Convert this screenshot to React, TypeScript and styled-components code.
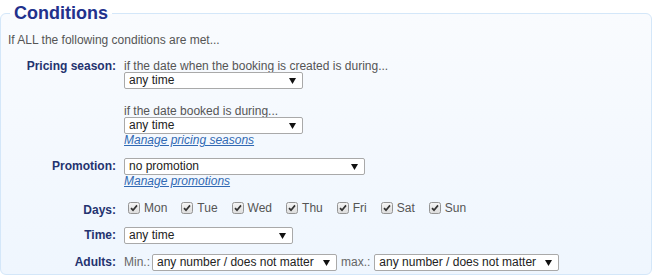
import React from "react";
import { styled, createGlobalStyle } from "styled-components";

const GlobalStyle = createGlobalStyle`
  body {
    margin: 0;
    background: #ffffff;
    font-family: "Liberation Sans", Arial, sans-serif;
    font-size: 12px;
    color: #555555;
  }
`;

const Fieldset = styled.fieldset`
  margin: 2px 0 0;
  padding: 0 7px 0 7px;
  height: 273px;
  box-sizing: border-box;
  border: 1px solid #d4e7f9;
  border-radius: 6px;
  background: linear-gradient(#f9fbfe, #eff6fe);
  min-width: 0;
`;

const Legend = styled.legend`
  margin-left: 2px;
  padding: 0 4px;
  font-size: 18px;
  font-weight: 700;
  line-height: 22px;
  color: #22318c;
`;

const Intro = styled.p`
  margin: 9px 0 0;
  line-height: 14px;
  color: #555555;
`;

const Row = styled.div<{ $top: number }>`
  display: flex;
  align-items: baseline;
  margin-top: ${(p) => p.$top}px;
`;

const Label = styled.div`
  flex: 0 0 108px;
  margin-right: 8px;
  text-align: right;
  font-weight: 700;
  line-height: 14px;
  color: #24336f;
`;

const Cell = styled.div`
  display: flex;
  flex-direction: column;
  align-items: flex-start;
`;

const Hint = styled.span<{ $gap?: number }>`
  line-height: 12px;
  margin-top: ${(p) => p.$gap ?? 0}px;
  color: #555555;
`;

const SelectBox = styled.div<{ $w: number }>`
  display: inline-flex;
  align-items: center;
  justify-content: space-between;
  box-sizing: border-box;
  width: ${(p) => p.$w}px;
  height: 17px;
  padding: 0 6px 0 4px;
  border: 1px solid #a9a9a9;
  border-radius: 2px;
  background: #ffffff;
  color: #222222;
  line-height: 15px;
  white-space: nowrap;
`;

const ManageLink = styled.a`
  line-height: 13px;
  font-style: italic;
  color: #3169b3;
  text-decoration: underline;
  cursor: pointer;
`;

const Days = styled.div`
  display: flex;
  align-items: center;
  gap: 14px;
  margin-left: 4px;
  height: 20px;
`;

const Day = styled.label`
  display: inline-flex;
  align-items: center;
  gap: 4px;
  line-height: 14px;
  color: #555555;
`;

const Inline = styled.div`
  display: flex;
  align-items: baseline;
`;

const Small = styled.span<{ $mr: number; $ml?: number }>`
  margin-right: ${(p) => p.$mr}px;
  margin-left: ${(p) => p.$ml ?? 0}px;
  color: #666666;
`;

const Arrow = () => (
  <svg width="7" height="6" viewBox="0 0 7 6">
    <path d="M0 0 H7 L3.5 6 Z" fill="#111" />
  </svg>
);

const Check = () => (
  <svg width="12" height="12" viewBox="0 0 12 12">
    <defs>
      <linearGradient id="cb" x1="0" y1="0" x2="0" y2="1">
        <stop offset="0" stopColor="#f6f6f6" />
        <stop offset="1" stopColor="#dcdcdc" />
      </linearGradient>
    </defs>
    <rect x="0.5" y="0.5" width="11" height="11" rx="2" fill="url(#cb)" stroke="#959595" />
    <path d="M3 6.2 L5 8.2 L9 3.4" fill="none" stroke="#333333" strokeWidth="1.7" />
  </svg>
);

const Select = ({ w, value }: { w: number; value: string }) => (
  <SelectBox $w={w}>
    <span>{value}</span>
    <Arrow />
  </SelectBox>
);

const days = ["Mon", "Tue", "Wed", "Thu", "Fri", "Sat", "Sun"];

export default function App() {
  return (
    <>
      <GlobalStyle />
      <Fieldset>
        <Legend>Conditions</Legend>
        <Intro>If ALL the following conditions are met...</Intro>

        <Row $top={12}>
          <Label>Pricing season:</Label>
          <Cell>
            <Hint>if the date when the booking is created is during...</Hint>
            <Select w={179} value="any time" />
            <Hint $gap={16}>if the date booked is during...</Hint>
            <Select w={179} value="any time" />
            <ManageLink>Manage pricing seasons</ManageLink>
          </Cell>
        </Row>

        <Row $top={11}>
          <Label>Promotion:</Label>
          <Cell>
            <Select w={241} value="no promotion" />
            <ManageLink>Manage promotions</ManageLink>
          </Cell>
        </Row>

        <Row $top={10}>
          <Label>Days:</Label>
          <Days>
            {days.map((d) => (
              <Day key={d}>
                <Check />
                {d}
              </Day>
            ))}
          </Days>
        </Row>

        <Row $top={9}>
          <Label>Time:</Label>
          <Select w={169} value="any time" />
        </Row>

        <Row $top={10}>
          <Label>Adults:</Label>
          <Inline>
            <Small $mr={2}>Min.:</Small>
            <Select w={185} value="any number / does not matter" />
            <Small $mr={4} $ml={4}>max.:</Small>
            <Select w={185} value="any number / does not matter" />
          </Inline>
        </Row>
      </Fieldset>
    </>
  );
}
